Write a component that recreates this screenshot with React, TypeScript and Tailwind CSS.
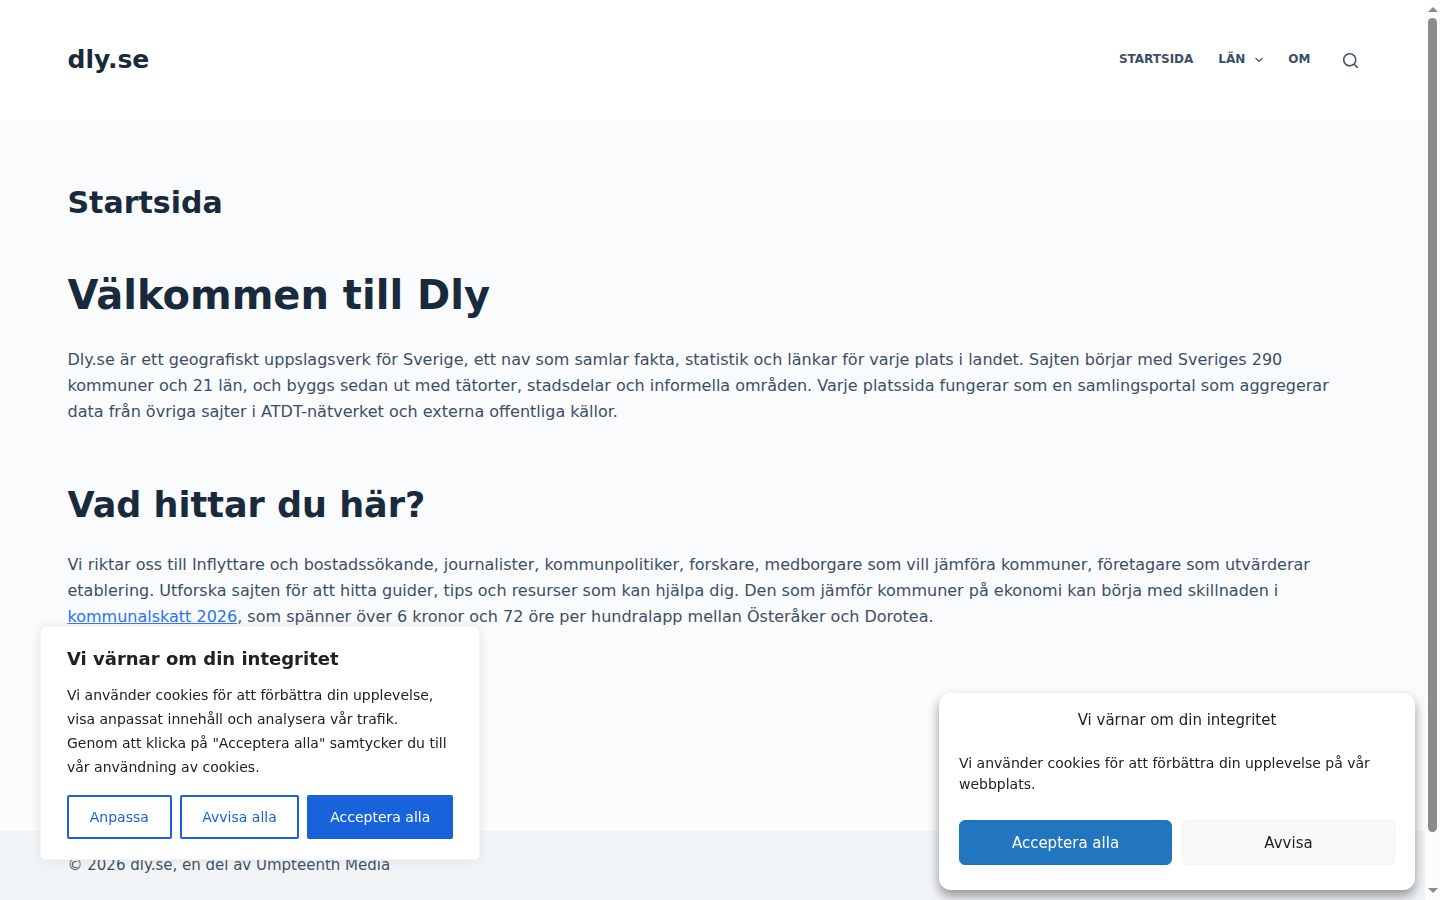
import React from 'react';

interface NavItem {
  label: string;
  href: string;
  hasMenu?: boolean;
}

const navItems: NavItem[] = [
  { label: 'Startsida', href: '#startsida' },
  { label: 'Län', href: '#lan', hasMenu: true },
  { label: 'Om', href: '#om' },
];

const Header: React.FC = () => {
  return (
    <header className="bg-white">
      <div className="max-w-[1290px] h-[120px] mx-auto flex items-center justify-between">
        <a href="#startsida" className="text-[25px] leading-9 font-bold text-[#192a3d]">
          dly.se
        </a>
        <div className="flex items-center">
          <nav className="flex items-center gap-[25px] text-xs font-bold uppercase text-[#3a4f66]">
            {navItems.map((item) => (
              <a key={item.label} href={item.href} className="flex items-center gap-[10px] pb-[2px]">
                {item.label}
                {item.hasMenu && (
                  <svg viewBox="0 0 15 15" className="w-2 h-2 mt-[2px]" fill="currentColor" aria-hidden="true">
                    <path d="M2.1,3.2l5.4,5.4l5.4-5.4L15,4.3l-7.5,7.5L0,4.3L2.1,3.2z" />
                  </svg>
                )}
              </a>
            ))}
          </nav>
          <button type="button" aria-label="Sök" className="pl-8 py-2 text-[#3a4f66]">
            <svg viewBox="0 0 15 15" className="w-[15px] h-[15px]" fill="currentColor" aria-hidden="true">
              <path d="M14.8,13.7L12,11c0.9-1.2,1.5-2.6,1.5-4.2c0-3.7-3-6.8-6.8-6.8S0,3,0,6.8s3,6.8,6.8,6.8c1.6,0,3.1-0.6,4.2-1.5l2.8,2.8c0.1,0.1,0.3,0.2,0.5,0.2s0.4-0.1,0.5-0.2C15.1,14.5,15.1,14,14.8,13.7z M1.5,6.8c0-2.9,2.4-5.2,5.2-5.2S12,3.9,12,6.8S9.6,12,6.8,12S1.5,9.6,1.5,6.8z" />
            </svg>
          </button>
        </div>
      </div>
    </header>
  );
};

const Article: React.FC = () => {
  return (
    <main className="flex-1 pt-[60px] pb-[60px]">
      <article className="max-w-[1290px] mx-auto text-base leading-[26px]">
        <h1 className="text-3xl leading-[45px] font-bold text-[#192a3d]">Startsida</h1>
        <h1 className="mt-10 text-[40px] leading-[60px] font-bold text-[#192a3d]">Välkommen till Dly</h1>
        <p className="mt-[22px]">
          Dly.se är ett geografiskt uppslagsverk för Sverige, ett nav som samlar fakta, statistik och länkar för varje
          plats i landet. Sajten börjar med Sveriges 290 kommuner och 21 län, och byggs sedan ut med tätorter,
          stadsdelar och informella områden. Varje platssida fungerar som en samlingsportal som aggregerar data från
          övriga sajter i ATDT-nätverket och externa offentliga källor.
        </p>
        <h2 className="mt-[54px] text-[35px] leading-[52px] font-bold text-[#192a3d]">Vad hittar du här?</h2>
        <p className="mt-[21px]">
          Vi riktar oss till Inflyttare och bostadssökande, journalister, kommunpolitiker, forskare, medborgare som vill
          jämföra kommuner, företagare som utvärderar etablering. Utforska sajten för att hitta guider, tips och
          resurser som kan hjälpa dig. Den som jämför kommuner på ekonomi kan börja med skillnaden i{' '}
          <a href="#kommunalskatt" className="text-[#2872fa] underline">
            kommunalskatt 2026
          </a>
          , som spänner över 6 kronor och 72 öre per hundralapp mellan Österåker och Dorotea.
        </p>
      </article>
    </main>
  );
};

const PrivacyCard: React.FC = () => {
  return (
    <section
      aria-labelledby="privacy-title"
      className="fixed left-10 bottom-10 w-[440px] p-[26px] pt-[18px] pb-5 bg-white border border-[#f4f4f4] rounded-md shadow-[0_0_10px_rgba(172,171,171,0.3)] text-sm text-[#212121]"
    >
      <h2 id="privacy-title" className="text-lg leading-7 font-bold">
        Vi värnar om din integritet
      </h2>
      <p className="mt-[10px] leading-6">
        Vi använder cookies för att förbättra din upplevelse, visa anpassat innehåll och analysera vår trafik. Genom att
        klicka på "Acceptera alla" samtycker du till vår användning av cookies.
      </p>
      <div className="mt-4 flex gap-2 leading-6">
        <button type="button" className="flex-auto py-2 border-2 border-[#1863dc] rounded-xs text-[#1863dc]">
          Anpassa
        </button>
        <button type="button" className="flex-auto py-2 border-2 border-[#1863dc] rounded-xs text-[#1863dc]">
          Avvisa alla
        </button>
        <button type="button" className="flex-auto py-2 border-2 border-[#1863dc] rounded-xs bg-[#1863dc] text-white">
          Acceptera alla
        </button>
      </div>
    </section>
  );
};

const ConsentCard: React.FC = () => {
  return (
    <section
      aria-labelledby="consent-title"
      className="fixed right-[25px] bottom-[10px] w-[476px] px-5 pt-[15px] pb-[25px] bg-white rounded-xl shadow-[0_6px_12px_rgba(0,0,0,0.4)] text-[#222222]"
    >
      <h2 id="consent-title" className="text-center text-[15px] leading-6">
        Vi värnar om din integritet
      </h2>
      <p className="mt-[21px] text-sm leading-[21px]">
        Vi använder cookies för att förbättra din upplevelse på vår webbplats.
      </p>
      <div className="mt-[25px] grid grid-cols-2 gap-[10px] text-[15px] leading-6">
        <button type="button" className="h-[45px] border border-[#1e73be] bg-[#2276c0] rounded-md text-white">
          Acceptera alla
        </button>
        <button type="button" className="h-[45px] border border-[#f2f2f2] bg-[#f9f9f9] rounded-md">
          Avvisa
        </button>
      </div>
    </section>
  );
};

const ScrollRail: React.FC = () => {
  return (
    <div aria-hidden="true" className="sticky top-0 w-[15px] h-screen py-[7px] flex flex-col items-center bg-[#fcfcfc]">
      <svg viewBox="0 0 10 5" className="w-[10px] h-[5px]" fill="#8b8b8b">
        <path d="M5 0L10 5H0z" />
      </svg>
      <div className="mt-[6px] mb-14 flex-1 w-[9px] rounded-full bg-[#8b8b8b]" />
      <svg viewBox="0 0 10 5" className="w-[10px] h-[5px]" fill="#8b8b8b">
        <path d="M0 0H10L5 5z" />
      </svg>
    </div>
  );
};

export default function App() {
  return (
    <div className="min-h-screen flex items-start bg-[#fafbfc] font-['DejaVu_Sans',sans-serif] text-[#3a4f66]">
      <div className="flex-1 min-w-0 min-h-screen flex flex-col">
        <Header />
        <Article />
        <footer className="bg-[#f2f5f7]">
          <p className="max-w-[1290px] mx-auto py-[22px] text-[15px] leading-[25px]">
            © 2026 dly.se, en del av Umpteenth Media
          </p>
        </footer>
      </div>
      <ScrollRail />
      <PrivacyCard />
      <ConsentCard />
    </div>
  );
}
